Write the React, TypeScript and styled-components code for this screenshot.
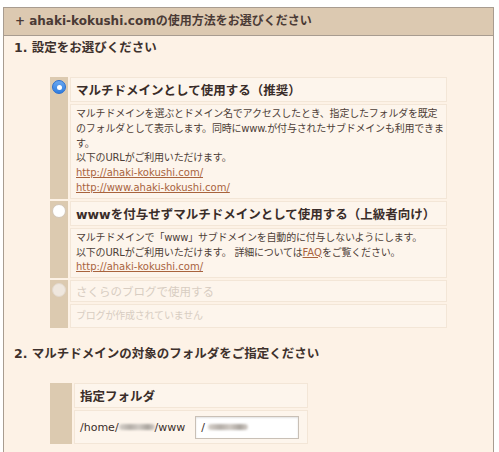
import React from "react";
import styled, { createGlobalStyle } from "styled-components";

const FONT = `"DejaVu Sans", "Noto Sans CJK JP", sans-serif`;

const Global = createGlobalStyle`
  html, body { margin: 0; padding: 0; background: #ffffff; }
  body { font-family: ${FONT}; color: #3e312c; }
`;

const Panel = styled.section`
  margin: 7px 0 0 3px;
  width: 491px;
  height: 470px;
  box-sizing: border-box;
  border: 1px solid #a89c90;
  background: #fdf2e6;
`;

const PanelHeader = styled.h2`
  margin: 0;
  height: 28px;
  box-sizing: border-box;
  border-bottom: 1px solid #a89c90;
  background: #dcc9b1;
  padding-left: 11px;
  font-size: 12px;
  font-weight: bold;
  line-height: 27px;
  color: #4a3a35;
`;

const StepHeading = styled.h3<{ $top: number }>`
  margin: ${(p) => p.$top}px 0 0 0;
  padding-left: 10px;
  font-size: 12.5px;
  font-weight: bold;
  line-height: 20px;
  color: #3e312c;
`;

const OptionList = styled.div`
  margin: 19px 0 0 46px;
  width: 397px;
  display: flex;
  flex-direction: column;
  gap: 2px;
`;

const OptionGroup = styled.div<{ $side: number; $main: number }>`
  display: grid;
  grid-template-columns: ${(p) => p.$side}px ${(p) => p.$main}px;
  gap: 2px;
`;

const SideCell = styled.div`
  grid-row: span 2;
  background: #dccab0;
  display: flex;
  justify-content: center;
  align-items: flex-start;
  padding-top: 3px;
`;

const Radio = styled.span<{ $state: "on" | "off" | "disabled" }>`
  width: 14px;
  height: 14px;
  box-sizing: border-box;
  border-radius: 50%;
  display: flex;
  align-items: center;
  justify-content: center;
  ${(p) =>
    p.$state === "on"
      ? `background: linear-gradient(#6aa8f0, #2f7de0); border: 1px solid #2a6fd0;`
      : p.$state === "off"
      ? `background: #ffffff; border: 1px solid #d2c6b8;`
      : `background: #efe7de; border: 1px solid #e2d8cc;`}
  &::after {
    content: "";
    width: 5px;
    height: 5px;
    border-radius: 50%;
    background: #ffffff;
    display: ${(p) => (p.$state === "on" ? "block" : "none")};
  }
`;

const Cell = styled.div`
  box-sizing: border-box;
  border: 1px solid #f3e6d7;
  background: #fdf5ec;
`;

const TitleCell = styled(Cell)<{ $disabled?: boolean; $h?: number }>`
  height: ${(p) => p.$h ?? 25}px;
  padding: 0 5px;
  display: flex;
  align-items: center;
  font-size: ${(p) => (p.$disabled ? 11.5 : 12.5)}px;
  font-weight: ${(p) => (p.$disabled ? "normal" : "bold")};
  color: ${(p) => (p.$disabled ? "#d8cdc2" : "#3a2d29")};
`;

const DescCell = styled(Cell)<{ $disabled?: boolean; $minH?: number }>`
  padding: 2px 0 2px 5px;
  min-height: ${(p) => p.$minH ?? 0}px;
  font-size: 10px;
  line-height: 14.8px;
  letter-spacing: -0.2px;
  color: ${(p) => (p.$disabled ? "#d8cdc2" : "#4d3e37")};
  display: flex;
  flex-direction: column;
  justify-content: center;
`;

const Link = styled.a`
  color: #a8633d;
  text-decoration: underline;
  letter-spacing: 0;
`;

const FolderTable = styled(OptionGroup)`
  margin: 19px 0 0 46px;
`;

const FolderRow = styled(Cell)`
  height: 34px;
  padding: 0 5px;
  display: flex;
  align-items: center;
  gap: 10px;
  font-size: 11px;
  color: #3a2d29;
`;

const PathText = styled.span`
  display: flex;
  align-items: center;
  white-space: nowrap;
`;

const Redacted = styled.span<{ $w: number }>`
  display: inline-block;
  width: ${(p) => p.$w}px;
  height: 6px;
  border-radius: 3px;
  background: linear-gradient(90deg, #d8d2cc, #b4aea8 30%, #cfc9c3 55%, #aaa49e 80%, #d6d0ca);
  filter: blur(1.2px);
`;

const FolderInput = styled.div`
  width: 104px;
  height: 23px;
  box-sizing: border-box;
  border: 1px solid #c9c0b6;
  background: #ffffff;
  box-shadow: inset 0 1px 2px rgba(0, 0, 0, 0.12);
  display: flex;
  align-items: center;
  padding-left: 5px;
  gap: 3px;
  font-size: 11px;
`;

export default function App() {
  return (
    <>
      <Global />
      <Panel>
        <PanelHeader>+ ahaki-kokushi.comの使用方法をお選びください</PanelHeader>
        <StepHeading $top={2}>1. 設定をお選びください</StepHeading>
        <OptionList>
          <OptionGroup $side={18} $main={377}>
            <SideCell>
              <Radio $state="on" />
            </SideCell>
            <TitleCell>マルチドメインとして使用する（推奨）</TitleCell>
            <DescCell>
              <span>
                マルチドメインを選ぶとドメイン名でアクセスしたとき、指定したフォルダを既定のフォルダとして表示します。同時にwww.が付与されたサブドメインも利用できます。
              </span>
              <span>以下のURLがご利用いただけます。</span>
              <span>
                <Link href="#">http://ahaki-kokushi.com/</Link>
              </span>
              <span>
                <Link href="#">http://www.ahaki-kokushi.com/</Link>
              </span>
            </DescCell>
          </OptionGroup>
          <OptionGroup $side={18} $main={377}>
            <SideCell>
              <Radio $state="off" />
            </SideCell>
            <TitleCell>wwwを付与せずマルチドメインとして使用する（上級者向け）</TitleCell>
            <DescCell>
              <span>マルチドメインで「www」サブドメインを自動的に付与しないようにします。</span>
              <span>
                以下のURLがご利用いただけます。 詳細については<Link href="#">FAQ</Link>をご覧ください。
              </span>
              <span>
                <Link href="#">http://ahaki-kokushi.com/</Link>
              </span>
            </DescCell>
          </OptionGroup>
          <OptionGroup $side={18} $main={377}>
            <SideCell>
              <Radio $state="disabled" />
            </SideCell>
            <TitleCell $disabled $h={22}>
              さくらのブログで使用する
            </TitleCell>
            <DescCell $disabled $minH={24}>
              ブログが作成されていません
            </DescCell>
          </OptionGroup>
        </OptionList>
        <StepHeading $top={16}>2. マルチドメインの対象のフォルダをご指定ください</StepHeading>
        <FolderTable $side={22} $main={234}>
          <SideCell />
          <TitleCell>指定フォルダ</TitleCell>
          <FolderRow>
            <PathText>
              /home/
              <Redacted $w={36} />
              /www
            </PathText>
            <FolderInput>
              /
              <Redacted $w={40} />
            </FolderInput>
          </FolderRow>
        </FolderTable>
      </Panel>
    </>
  );
}
